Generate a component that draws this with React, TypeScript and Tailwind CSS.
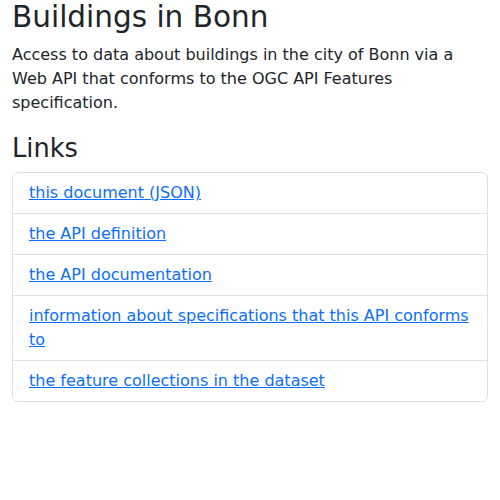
import React from 'react';

const links = [
  'this document (JSON)',
  'the API definition',
  'the API documentation',
  'information about specifications that this API conforms to',
  'the feature collections in the dataset',
];

const App: React.FC = () => {
  return (
    <div className="min-h-[500px] bg-white px-3 text-[16px] leading-[24px] text-[#212529] [font-family:'DejaVu_Sans',sans-serif]">
      <h1 className="mb-2 text-[29.5px] font-medium leading-[1.2]">Buildings in Bonn</h1>
      <p className="mb-[18px]">
        Access to data about buildings in the city of Bonn via a Web API that conforms to the OGC API Features
        specification.
      </p>
      <h2 className="mb-2 mt-0 text-[25.7px] font-medium leading-[1.2]">Links</h2>
      <ul className="mt-[2px] rounded-[6px] border border-[#dee2e6]">
        {links.map((text, i) => (
          <li key={i} className={`px-4 py-2 ${i > 0 ? 'border-t border-[#dee2e6]' : ''}`}>
            <a href="#" className="text-[#0d6efd] underline">
              {text}
            </a>
          </li>
        ))}
      </ul>
    </div>
  );
};

export default App;
